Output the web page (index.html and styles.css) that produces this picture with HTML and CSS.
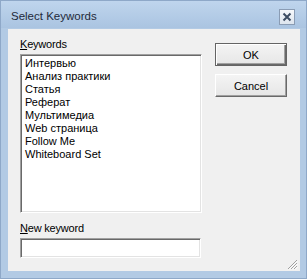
FILE: index.html
```html
<!DOCTYPE html>
<html>
<head>
<meta charset="utf-8">
<link rel="stylesheet" href="styles.css">
</head>
<body>
<div class="window">
  <div class="titlebar">
    <span class="title">Select Keywords</span>
    <span class="close">
      <svg width="10" height="10" viewBox="0 0 10 10"><path d="M1.5 1.5 L8.5 8.5 M8.5 1.5 L1.5 8.5" stroke="#3d4d63" stroke-width="2"/></svg>
    </span>
  </div>
  <div class="client">
    <div class="left">
      <div class="label"><u>K</u>eywords</div>
      <div class="listbox">
        <div class="item">Интервью</div>
        <div class="item">Анализ практики</div>
        <div class="item">Статья</div>
        <div class="item">Реферат</div>
        <div class="item">Мультимедиа</div>
        <div class="item">Web страница</div>
        <div class="item">Follow Me</div>
        <div class="item">Whiteboard Set</div>
      </div>
      <div class="label label-new"><u>N</u>ew keyword</div>
      <div class="textbox"></div>
    </div>
    <div class="right">
      <div class="btn btn-default"><span class="btn-inner">OK</span></div>
      <div class="btn"><span class="btn-inner">Cancel</span></div>
    </div>
    <svg class="grip" width="12" height="12" viewBox="0 0 12 12">
      <path d="M11 2 L2 11 M11 5 L5 11 M11 8 L8 11" stroke="#a0a0a0" stroke-width="1"/>
      <path d="M11.5 3 L3 11.5 M11.5 6 L6 11.5 M11.5 9 L9 11.5" stroke="#ffffff" stroke-width="1"/>
    </svg>
  </div>
</div>
</body>
</html>
```
FILE: styles.css
```css
html, body {
  margin: 0;
  padding: 0;
  background: #ffffff;
}
.window {
  width: 307px;
  height: 279px;
  box-sizing: border-box;
  background: #b2cae4;
  border: 1px solid #8ea8c8;
  display: flex;
  flex-direction: column;
  font-family: "Liberation Sans", Arial, sans-serif;
  color: #000;
}
.titlebar {
  height: 27px;
  display: flex;
  align-items: center;
  justify-content: space-between;
  padding: 0 11px 0 10px;
  background: linear-gradient(#bfd5ed, #aac4e1);
}
.title {
  font-size: 11.5px;
  color: #1e2a3a;
  margin-top: 3px;
}
.close {
  width: 14px;
  height: 14px;
  border: 1px solid #8a9cb4;
  background: linear-gradient(#f6f8fb, #dde5ee);
  display: flex;
  align-items: center;
  justify-content: center;
  margin-top: 4px;
}
.client {
  position: relative;
  margin: 1px 6px 0 7px;
  height: 242px;
  background: #f0f0f0;
  border-top: 0;
  display: flex;
  box-sizing: border-box;
}
.left {
  margin-left: 12px;
  width: 182px;
  padding-top: 9px;
  display: flex;
  flex-direction: column;
}
.label {
  font-size: 11px;
  line-height: 13px;
  height: 13px;
  letter-spacing: -0.2px;
}
.label u {
  text-underline-offset: 1px;
}
.listbox {
  margin-top: 3px;
  height: 159px;
  box-sizing: border-box;
  background: #fff;
  border-top: 1px solid #a0a0a0;
  border-left: 1px solid #a0a0a0;
  border-right: 1px solid #fff;
  border-bottom: 1px solid #fff;
  box-shadow: inset 1px 1px 0 #696969, inset -1px -1px 0 #e3e3e3;
  padding: 2px 0 0 4px;
}
.item {
  font-size: 11px;
  line-height: 13px;
  height: 13px;
  white-space: nowrap;
}
.label-new {
  margin-top: 9px;
}
.textbox {
  margin-top: 3px;
  width: 181px;
  height: 20px;
  box-sizing: border-box;
  background: #fff;
  border-top: 1px solid #a0a0a0;
  border-left: 1px solid #a0a0a0;
  border-right: 1px solid #fff;
  border-bottom: 1px solid #fff;
  box-shadow: inset 1px 1px 0 #696969, inset -1px -1px 0 #e3e3e3;
}
.right {
  margin-left: 13px;
  padding-top: 14px;
  display: flex;
  flex-direction: column;
  gap: 8px;
}
.btn {
  width: 72px;
  height: 23px;
  box-sizing: border-box;
  border-top: 1px solid #ffffff;
  border-left: 1px solid #ffffff;
  border-right: 1px solid #696969;
  border-bottom: 1px solid #696969;
  box-shadow: inset -1px -1px 0 #a0a0a0;
  background: linear-gradient(#f4f4f4, #e6e6e6);
  display: flex;
}
.btn-inner {
  flex: 1;
  display: flex;
  align-items: center;
  justify-content: center;
  font-size: 11px;
}
.btn-default {
  border: 1px solid #646464;
  box-shadow: inset 1px 1px 0 #ffffff, inset -1px -1px 0 #696969, inset -2px -2px 0 #a0a0a0;
}
.grip {
  position: absolute;
  right: 2px;
  bottom: 1px;
}
```
